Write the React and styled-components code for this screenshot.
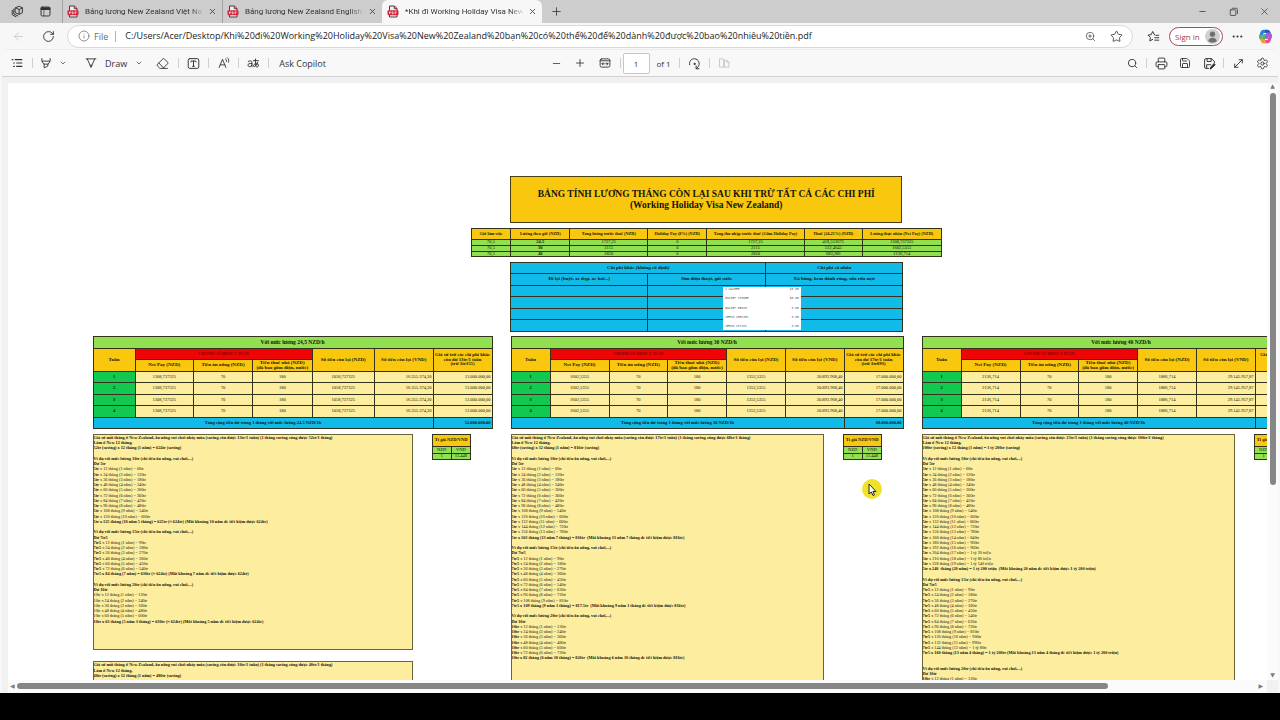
import React, { useState } from 'react'
import styled, { createGlobalStyle, css } from 'styled-components'
import { Minus, Plus, X, Search, Printer, Save, Settings, Star, ZoomIn, Info, ArrowLeft, RotateCw, ChevronDown, Eraser, MoveDiagonal, Ellipsis } from 'lucide-react'


const GlobalStyle = createGlobalStyle`
*, *::before, *::after{
  box-sizing: border-box;
}
body{
  margin: 0;
  background: #000;
  font-family: 'Open Sans', 'Noto Sans', sans-serif;
  color: #333;
}
button, input{
  font: inherit;
  color: inherit;
}
`

const MainContainer = styled.div`
display: flex;
flex-direction: column;
height: 100vh;
padding-bottom: 27px;
`

const Browser = styled.div`
display: flex;
flex-direction: column;
flex: 1;
min-height: 0;
background: #f7f7f8;
`

// ---------- tab strip ----------

const TabStrip = styled.header`
display: flex;
align-items: center;
height: 23px;
padding-left: 3px;
background: #cdcdcd;
`

const IconButton = styled.button`
display: flex;
align-items: center;
justify-content: center;
flex: none;
width: ${props => props.$w || 28}px;
height: 22px;
padding: 0;
border: none;
background: transparent;
color: ${props => props.$faded ? '#c4c4c6' : '#333'};
cursor: pointer;
`

const Tabs = styled.nav`
display: flex;
padding-left: 3px;
`

const Tab = styled.div`
display: flex;
align-items: center;
width: 160px;
height: 23px;
padding: 0 2px 0 4px;
border-left: 1px solid ${props => props.$active ? 'transparent' : '#a3a3a3'};

${props => props.$active && css`
  background: #f7f7f8;
  border-radius: 6px 6px 0 0;
`}
`

const TabTitle = styled.span`
flex: 1;
margin-left: 6px;
overflow: hidden;
white-space: nowrap;
font-family: Roboto, sans-serif;
font-size: 8px;
line-height: 12px;
mask-image: linear-gradient(to right, #000 88%, transparent);
`

const WindowControls = styled.div`
display: flex;
margin-left: auto;
`

// ---------- address row ----------

const AddressRow = styled.div`
display: flex;
align-items: center;
height: 26px;
padding: 0 1px 0 3px;
`

const AddressBar = styled.label`
display: flex;
align-items: center;
flex: 1;
height: 23px;
margin: 0 4px;
padding: 0 3px 0 10px;
border: 1px solid #d8d8da;
border-radius: 12px;
background: #fff;
font-size: 9px;
color: #6b6b6b;
`

const FileLabel = styled.span`
margin-left: 4px;
padding-right: 7px;
border-right: 1px solid #b5b5b5;
line-height: 11px;
`

const AddressInput = styled.input`
flex: 1;
min-width: 0;
padding: 0 0 0 9px;
border: none;
outline: none;
background: transparent;
color: #222;
font-size: 9px;
line-height: 14px;
`

const SignIn = styled.button`
display: flex;
align-items: center;
justify-content: space-between;
width: 54px;
height: 19px;
padding: 0 2px 0 5px;
border: 1px solid #a34c5a;
border-radius: 10px;
background: #fff;
color: #a33a4a;
font-size: 8px;
white-space: nowrap;
`

// ---------- pdf toolbar ----------

const Toolbar = styled.div`
display: grid;
grid-template-columns: 1fr auto 1fr;
align-items: center;
height: 28px;
margin: 0 2px;
padding: 0 4px;
border-top: 1px solid #ececee;
border-bottom: 1px solid #d0d0d0;
border-radius: 6px 6px 0 0;
background: #f8f8f9;
font-size: 9px;
`

const Group = styled.div`
display: flex;
align-items: center;
justify-content: ${props => props.$end ? 'flex-end' : 'flex-start'};
`

const Divider = styled.span`
width: 1px;
height: 10px;
margin: 0 ${props => props.$tight ? 2 : 4}px;
background: #cfcfcf;
`

const DrawButton = styled.button`
display: flex;
align-items: center;
gap: 8px;
margin-left: 14px;
padding: 0;
border: none;
background: transparent;
`

const CopilotButton = styled.button`
padding: 0 6px;
border: none;
background: transparent;
white-space: nowrap;
`

const PageInput = styled.input`
width: 27px;
height: 21px;
padding: 0;
border: 1px solid #c6c6c6;
border-radius: 2px;
background: #fff;
text-align: center;
font-size: 8px;
`

const PageCount = styled.span`
width: 25px;
padding-left: 7px;
white-space: nowrap;
font-size: 8px;
`

// ---------- viewer ----------

const Viewer = styled.main`
display: grid;
grid-template-columns: 1fr 11px;
grid-template-rows: 1fr 13px;
flex: 1;
min-height: 0;
margin: 0 2px;
padding: 6px 0 0 6px;
background: #f1f1f1;
`

const Viewport = styled.div`
position: relative;
overflow: hidden;
background: #fff;
`

const ScrollTrack = styled.div`
display: flex;
align-items: center;
flex-direction: ${props => props.$vertical ? 'column' : 'row'};
padding: ${props => props.$vertical ? '0 0 2px' : '0 4px 2px 2px'};
background: #fbfbfb;
color: #7c7c7c;
font-family: 'DejaVu Sans', sans-serif;
font-size: 6px;
line-height: 6px;
`

const Rail = styled.div`
flex: 1;
margin: ${props => props.$vertical ? '4px 0 2px' : '0 2px'};

&::before{
  content: '';
  display: block;
  width: ${props => props.$vertical ? '6px' : '88%'};
  height: ${props => props.$vertical ? '68%' : '6px'};
  border-radius: 3px;
  background: #868686;
}
`

const Pointer = styled.div`
position: absolute;
left: 854px;
top: 396px;
width: 20px;
height: 20px;
border-radius: 50%;
background: #efe32a;
`

// ---------- the page, set at full size and zoomed out by the viewer ----------

const Sheet = styled.article`
zoom: ${props => props.$zoom};
display: flex;
flex-direction: column;
align-items: center;
gap: 18px;
width: 5248px;
padding: 372px 0 0 338px;
font-family: 'Liberation Serif', serif;
font-size: 17px;
line-height: 21px;
color: #14140c;
`

const Banner = styled.h1`
display: flex;
align-items: center;
justify-content: center;
width: 1568px;
height: 188px;
margin: 0;
padding-top: 4px;
border: 4px solid #4a3f10;
background: #f9c80e;
text-align: center;
font-size: 38px;
line-height: 46px;
`

const Table = styled.table`
width: ${props => props.$w ? props.$w + 'px' : '100%'};
border-collapse: collapse;
table-layout: fixed;
line-height: 18px;

th, td{
  padding: 0 4px;
  border: 4px solid #33331c;
  overflow: hidden;
}

th{
  padding: 0;
}
`

const Row = styled.tr`
height: ${props => props.$h || 46}px;
`

const tones = {
  gold: '#f9c80e',
  lime: '#92e052',
  cyan: '#10bbea',
  cream: '#fcee9e',
  green: '#12c850',
  red: '#ee0505',
}

const Head = styled.th`
background: ${props => tones[props.$tone]};
color: ${props => props.$tone === 'red' ? '#8c0000' : 'inherit'};
font-size: ${props => props.$size || 20}px;
white-space: nowrap;
`

const Cell = styled.td`
background: ${props => tones[props.$tone]};
text-align: ${props => props.$right ? 'right' : 'center'};
font-weight: ${props => props.$bold ? 700 : 400};
font-size: 18px;
`

const CostsWrap = styled.div`
position: relative;
width: 1568px;
`

const Receipt = styled.div`
position: absolute;
left: 850px;
top: 100px;
display: flex;
flex-direction: column;
justify-content: space-between;
width: 314px;
height: 172px;
padding: 6px 10px;
background: #fff;
font-family: 'Liberation Mono', monospace;
font-size: 12px;
line-height: 14px;
color: #555;
`

const ReceiptLine = styled.div`
display: flex;
justify-content: space-between;
`

const Columns = styled.div`
display: flex;
align-items: flex-start;
gap: 76px;
width: 100%;
`

const Column = styled.section`
display: flex;
flex-direction: column;
gap: 18px;
width: ${props => props.$w}px;
`

const Below = styled.div`
display: flex;
align-items: flex-start;
gap: 76px;
`

const NotesStack = styled.div`
display: flex;
flex-direction: column;
gap: 46px;
width: ${props => props.$w}px;
`

const Notes = styled.div`
min-height: ${props => props.$h}px;
border: 4px solid #6b6536;
background: #fcee9e;
white-space: pre;
`

const Line = styled.p`
min-height: 21px;
margin: 0;
font-weight: ${props => props.$bold ? 700 : 400};
`


const rates = [
  ['70,5', '24,5', '1727,25', '0', '1727,25', '418,512675', '1308,737325'],
  ['70,5', '30', '2115', '0', '2115', '512,4645', '1602,5355'],
  ['70,5', '40', '2820', '0', '2820', '683,286', '2136,714'],
]

const receipt = [
  ['1 WASHER', '$3.00'],
  ['BUCKET SPONGE', '$5.00'],
  ['BUCKET BRUSH', '3.00'],
  ['SERVO SHELVES', '3.00'],
  ['SERVO series', '3.00'],
]

const columns = [
  {
    width: 1596,
    notesWidth: 1280,
    cols: [168, 234, 236, 238, 250, 234, 236],
    wage: '24,5',
    net: '1308,737325',
    left: '1058,737325',
    vnd: '16.355.374,20',
    spare: '13.000.000,00',
    total: '52.000.000,00',
    perWeek: '13tr',
    cut: '3tr355',
    notes: [
      {
        height: 864,
        intro: ['13tr', '52tr', '52tr (saving) x 12 tháng (1 năm) = 624tr (saving)'],
        plans: [
          { income: '10tr', spare: '5tr', per: 5, years: 10, end: '5tr x 125 tháng (10 năm 5 tháng) = 625tr (≈ 624tr) (Mất khoảng 10 năm để tiết kiệm được 624tr)' },
          { income: '15tr', spare: '7tr5', per: 7.5, years: 6, end: '7tr5 x 84 tháng (7 năm) = 630tr (≈ 624tr) (Mất khoảng 7 năm để tiết kiệm được 624tr)' },
          { income: '20tr', spare: '10tr', per: 10, years: 5, light: true, end: '10tr x 63 tháng (5 năm 3 tháng) = 630tr (≈ 624tr) (Mất khoảng 5 năm để tiết kiệm được 624tr)' },
        ],
      },
      {
        height: 864,
        intro: ['10tr', '40tr', '40tr (saving) x 12 tháng (1 năm) = 480tr (saving)'],
        plans: [],
      },
    ],
  },
  {
    width: 1568,
    notesWidth: 1252,
    cols: [156, 236, 234, 236, 236, 234, 236],
    wage: '30',
    net: '1602,5355',
    left: '1352,5355',
    vnd: '20.893.968,40',
    spare: '17.000.000,00',
    total: '68.000.000,00',
    perWeek: '17tr',
    cut: '3tr893',
    notes: [
      {
        height: 1100,
        intro: ['17tr', '68tr', '68tr (saving) x 12 tháng (1 năm) = 816tr (saving)'],
        plans: [
          { income: '10tr', spare: '5tr', per: 5, years: 13, end: '5tr x 163 tháng (13 năm 7 tháng) = 816tr  (Mất khoảng 13 năm 7 tháng để tiết kiệm được 816tr)' },
          { income: '15tr', spare: '7tr5', per: 7.5, years: 9, end: '7tr5 x 109 tháng (9 năm 1 tháng) = 817.5tr  (Mất khoảng 9 năm 1 tháng để tiết kiệm được 816tr)' },
          { income: '20tr', spare: '10tr', per: 10, years: 6, end: '10tr x 82 tháng (6 năm 10 tháng) = 820tr  (Mất khoảng 6 năm 10 tháng để tiết kiệm được 816tr)' },
        ],
      },
    ],
  },
  {
    width: 1592,
    notesWidth: 1252,
    cols: [156, 236, 234, 236, 236, 234, 260],
    wage: '40',
    net: '2136,714',
    left: '1886,714',
    vnd: '29.145.957,87',
    spare: '25.000.000,00',
    total: '100.000.000,00',
    perWeek: '25tr',
    cut: '4tr145',
    notes: [
      {
        height: 1100,
        intro: ['25tr', '100tr', '100tr (saving) x 12 tháng (1 năm) = 1 tỷ 200tr (saving)'],
        plans: [
          { income: '10tr', spare: '5tr', per: 5, years: 19, end: '5tr x 240  tháng (20 năm) = 1 tỷ 200 triệu  (Mất khoảng 20 năm để tiết kiệm được 1 tỷ 200 triệu)' },
          { income: '15tr', spare: '7tr5', per: 7.5, years: 12, extra: true, end: '7tr5 x 160 tháng (13 năm 4 tháng) = 1 tỷ 200tr (Mất khoảng 13 năm 4 tháng để tiết kiệm được 1 tỷ 200 triệu)' },
          { income: '20tr', spare: '10tr', per: 10, years: 1 },
        ],
      },
    ],
  },
]

const money = (value, per) => {
  if (value < 1000) return `${value}tr`
  return per === 5 ? `1 tỷ ${value - 1000} triệu` : `1 tỷ ${value - 1000}tr`
}


const PdfIcon = () => (
  <svg width="12" height="13" viewBox="0 0 12 13" fill="none">
    <path d="M2.5 6V1h5l2.5 2.5V6M2.5 10v2H10v-2" fill="#f4eded" stroke="#5d3338" />
    <path d="M7.3 1v2.7H10" stroke="#5d3338" />
    <rect x="0.5" y="5.3" width="11" height="5" rx="1" fill="#d3283c" />
    <path d="M2.5 9V6.8h1v1h-1M5.2 6.8V9c1.6 0 1.6-2.2 0-2.2M8 9V6.8h1.6M8 8h1.2" stroke="#fff" strokeWidth="0.6" />
  </svg>
)

const Glyph = ({ size = 13, children }) => (
  <svg width={size} height={size} viewBox="0 0 16 16" fill="none" stroke="currentColor" strokeWidth="1.2" strokeLinecap="round" strokeLinejoin="round">{children}</svg>
)

const CopilotLogo = () => (
  <svg width="15" height="15" viewBox="0 0 16 16" fill="none" strokeWidth="3.4" strokeLinecap="round" strokeLinejoin="round">
    <path d="M9 2.5H6.2C4.8 2.5 4.3 3.4 4 4.5L3 8" stroke="#2a7de1" />
    <path d="M3 7.5c-.6 2 0 3 1.4 3H6l1-3.5" stroke="#4cb86a" />
    <path d="M9 2.5h1.3c1 0 1.3 1.2 1.6 2.5" stroke="#2457c5" />
    <path d="M7 13.5h2.8c1.4 0 1.9-.9 2.2-2l1-3.5" stroke="#e0518f" />
    <path d="M13 8.5c.6-2 0-3-1.4-3H10l-1 3.5" stroke="#a45be0" />
    <path d="M7 13.5H5.7c-.9 0-1.2-1-1.5-2" stroke="#f39a3c" />
  </svg>
)

const BrowserTab = ({ title, active }) => (
  <Tab $active={active}>
    <PdfIcon />
    <TabTitle>{title}</TabTitle>
    <IconButton $w={16} aria-label="Close tab"><X size={9} /></IconButton>
  </Tab>
)

const Chrome = () => {
  const [url, setUrl] = useState('C:/Users/Acer/Desktop/Khi%20đi%20Working%20Holiday%20Visa%20New%20Zealand%20bạn%20có%20thể%20để%20dành%20được%20bao%20nhiêu%20tiền.pdf')

  return (
    <>
      <TabStrip>
        <IconButton aria-label="Workspaces">
          <Glyph>
            <path d="M5.5 3.5 10 1.5l4 2v6l-4 2-4.5-2zM5.5 3.5l4.5 2 4-2M10 5.5v6" />
            <path d="M3.5 5v6l5 2.5M1.5 6.5V12L6 14.5" />
          </Glyph>
        </IconButton>
        <IconButton aria-label="Tab actions">
          <Glyph>
            <rect x="2.5" y="2.5" width="11" height="11" rx="1.5" />
            <path d="M3 4h10M3 5h10" strokeWidth="2.2" />
            <path d="M6 5v8" strokeWidth="0.8" />
          </Glyph>
        </IconButton>
        <Tabs>
          <BrowserTab title="Bảng lương New Zealand Việt Na" />
          <BrowserTab title="Bảng lương New Zealand English." />
          <BrowserTab title="*Khi đi Working Holiday Visa New" active />
        </Tabs>
        <IconButton aria-label="New tab"><Plus size={13} strokeWidth={1.5} /></IconButton>
        <WindowControls>
          <IconButton $w={31} aria-label="Minimize"><Minus size={9} /></IconButton>
          <IconButton $w={31} aria-label="Restore">
            <Glyph size={10}><rect x="2" y="4.5" width="9" height="9" rx="1" /><path d="M5 2h6.5a2 2 0 0 1 2 2v6.5" /></Glyph>
          </IconButton>
          <IconButton $w={31} aria-label="Close"><X size={11} strokeWidth={1.5} /></IconButton>
        </WindowControls>
      </TabStrip>

      <AddressRow>
        <IconButton $w={30} $faded aria-label="Back"><ArrowLeft size={13} strokeWidth={1.5} /></IconButton>
        <IconButton $w={30} aria-label="Refresh"><RotateCw size={13} strokeWidth={1.7} /></IconButton>
        <AddressBar>
          <Info size={12} strokeWidth={1.5} />
          <FileLabel>File</FileLabel>
          <AddressInput aria-label="Address" value={url} onChange={e => setUrl(e.target.value)} />
          <IconButton $w={26} aria-label="Zoom"><ZoomIn size={11} strokeWidth={1.5} /></IconButton>
          <IconButton $w={26} aria-label="Add to favorites"><Star size={13} strokeWidth={1.5} /></IconButton>
        </AddressBar>
        <IconButton $w={32} aria-label="Favorites">
          <Glyph>
            <path d="M9.5 6.3 7 1.8 5.2 5.7l-4 .6 3 3-.7 4.2L7 11.5M11 6.5h3.5M9.5 9.5h5M9.5 12.5h5" />
          </Glyph>
        </IconButton>
        <SignIn>
          Sign in
          <svg width="15" height="15" viewBox="0 0 16 16">
            <circle cx="8" cy="8" r="8" fill="#cfcfcf" />
            <circle cx="8" cy="5.5" r="2.8" fill="#6f6f6f" />
            <path d="M3.5 13c0-5 9-5 9 0-2.5 2-6.5 2-9 0z" fill="#6f6f6f" />
          </svg>
        </SignIn>
        <IconButton aria-label="Settings and more"><Ellipsis size={13} /></IconButton>
        <IconButton aria-label="Copilot"><CopilotLogo /></IconButton>
      </AddressRow>
    </>
  )
}

const PdfToolbar = () => {
  const [page, setPage] = useState('1')

  return (
    <Toolbar>
      <Group>
        <IconButton $w={22} aria-label="Contents">
          <Glyph size={12}><path d="M5.5 3.5h9M7.5 8h7M7.5 12.5h7M1.5 3.5h1M3.5 8h1M3.5 12.5h1" strokeWidth="1.4" /></Glyph>
        </IconButton>
        <Divider />
        <IconButton $w={18} aria-label="Highlight">
          <Glyph size={12}><path d="M2.5 2v3.5L5 9.5h6L13.5 5.5V2M3 5.5h10M5.5 9.5v5l5-2.5V9.5" /></Glyph>
        </IconButton>
        <IconButton $w={16} aria-label="Highlight colors"><ChevronDown size={8} /></IconButton>
        <DrawButton>
          <Glyph size={12}><path d="M1.5 2.5h13M3 2.5l4 9 1 2.5 1-2.5 4-9M6.8 11h2.4" /></Glyph>
          Draw
        </DrawButton>
        <IconButton $w={24} aria-label="Draw options"><ChevronDown size={8} /></IconButton>
        <IconButton $w={23} aria-label="Erase"><Eraser size={13} strokeWidth={1.7} /></IconButton>
        <Divider />
        <IconButton $w={21} aria-label="Add text">
          <Glyph><rect x="1.5" y="2" width="13" height="12" rx="2" /><path d="M5 6V5h6v1M8 5v6.5M7 11.5h2" /></Glyph>
        </IconButton>
        <Divider />
        <IconButton $w={21} aria-label="Read aloud">
          <Glyph size={12}><path d="M1.5 14 6 3l4.5 11M3 10.5h6M10 2.5c1.2.8 1.5 2 1.2 3.5M12.5 1c2 1.5 2.3 4 1.5 6" /></Glyph>
        </IconButton>
        <Divider />
        <IconButton $w={21} aria-label="Translate">
          <Glyph><path d="M1.5 5.5c2-1.5 4.5-.8 4.5 1V12M6 8C3 7.5 1 8.5 1.2 10.2 1.5 12.5 5 12.5 6 10M8 4.5h6M10.5 2.5c-.3 4 0 7 .8 9.5M13 6.5c-1 4-4 6-5 4.8-1.3-2 3.5-4 5.5-2.5 1.5 1.2.8 3-1 3.6" /></Glyph>
        </IconButton>
        <Divider />
        <CopilotButton>Ask Copilot</CopilotButton>
      </Group>

      <Group>
        <IconButton $w={22} aria-label="Zoom out"><Minus size={11} strokeWidth={1.7} /></IconButton>
        <IconButton $w={24} aria-label="Zoom in"><Plus size={12} strokeWidth={1.7} /></IconButton>
        <IconButton $w={26} aria-label="Fit to width">
          <Glyph size={12}><rect x="1.5" y="2.5" width="13" height="11" rx="2" /><path d="M1.5 5h13M4 9h3M5.5 7.5 4 9l1.5 1.5M12 9H9M10.5 7.5 12 9l-1.5 1.5" /></Glyph>
        </IconButton>
        <Divider $tight />
        <PageInput aria-label="Page" value={page} onChange={e => setPage(e.target.value)} />
        <PageCount>of 1</PageCount>
        <Divider />
        <IconButton $w={21} aria-label="Rotate">
          <Glyph><path d="M2 9.5C1 5 4.5 2 8 2.2c5 .3 7.5 6 4.3 10L10 14.5M10 11v3.5h3.5" /><circle cx="8" cy="8.5" r="0.8" fill="currentColor" /></Glyph>
        </IconButton>
        <Divider />
        <IconButton $w={21} $faded aria-label="Page view">
          <Glyph size={12}><path d="M7 13.5H2v-11h5zM9 4.5h3l2.5 2.5v6.5H9zM12 4.5V7h2.5" /></Glyph>
        </IconButton>
      </Group>

      <Group $end>
        <IconButton $w={24} aria-label="Find"><Search size={11} /></IconButton>
        <Divider $tight />
        <IconButton $w={24} aria-label="Print"><Printer size={13} strokeWidth={1.7} /></IconButton>
        <IconButton $w={24} aria-label="Save"><Save size={12} strokeWidth={1.8} /></IconButton>
        <IconButton $w={24} aria-label="Save as">
          <Glyph>
            <path d="M7 14H3.5A1.5 1.5 0 0 1 2 12.5v-9A1.5 1.5 0 0 1 3.5 2h7L14 5.5V7M5 2v3.5h5V2M4.5 14V9.5h5" />
            <path d="M9 14.5l.5-2L13.5 8l1.5 1.5-4.5 4.5z" fill="currentColor" />
          </Glyph>
        </IconButton>
        <Divider $tight />
        <IconButton $w={24} aria-label="Full screen"><MoveDiagonal size={13} strokeWidth={1.7} /></IconButton>
        <IconButton $w={24} aria-label="Settings"><Settings size={13} strokeWidth={1.7} /></IconButton>
      </Group>
    </Toolbar>
  )
}

const Cols = ({ widths }) => (
  <colgroup>{widths.map((w, i) => <col key={i} width={w} />)}</colgroup>
)

const RatesTable = () => (
  <Table $w={1880}>
    <Cols widths={[158, 236, 312, 236, 390, 232, 316]} />
    <thead>
      <Row>
        <Head $tone="gold" $size={17}>Giờ làm việc</Head>
        <Head $tone="gold" $size={17}>Lương theo giờ (NZD)</Head>
        <Head $tone="gold" $size={17}>Tổng lương trước thuế (NZD)</Head>
        <Head $tone="gold" $size={17}>Holiday Pay (8%) (NZD)</Head>
        <Head $tone="gold" $size={17}>Tổng thu nhập trước thuế (Gồm Holiday Pay)</Head>
        <Head $tone="gold" $size={17}>Thuế (24,25%) (NZD)</Head>
        <Head $tone="gold" $size={17}>Lương thực nhận (Net Pay) (NZD)</Head>
      </Row>
    </thead>
    <tbody>
      {rates.map(rate => (
        <Row key={rate[1]} $h={23}>
          {rate.map((value, i) => <Cell key={i} $tone="lime" $bold={i === 1}>{value}</Cell>)}
        </Row>
      ))}
    </tbody>
  </Table>
)

const CostsTable = () => (
  <CostsWrap>
    <Table>
      <Cols widths={[548, 472, 548]} />
      <thead>
        <Row>
          <Head $tone="cyan" colSpan={2}>Chi phí khác (không cố định)</Head>
          <Head $tone="cyan">Chi phí cá nhân</Head>
        </Row>
        <Row>
          <Head $tone="cyan">Đi lại (buýt, xe đạp, xe hơi...)</Head>
          <Head $tone="cyan">Sim điện thoại, gói cước</Head>
          <Head $tone="cyan">Xà bông, kem đánh răng, sữa rửa mặt</Head>
        </Row>
      </thead>
      <tbody>
        {[1, 2, 3, 4].map(n => (
          <Row key={n}>
            <Cell $tone="cyan" />
            <Cell $tone="cyan" />
            <Cell $tone="cyan" />
          </Row>
        ))}
      </tbody>
    </Table>
    <Receipt>
      {receipt.map(([item, price]) => (
        <ReceiptLine key={item}><span>{item}</span><span>{price}</span></ReceiptLine>
      ))}
    </Receipt>
  </CostsWrap>
)

const WageTable = ({ data }) => (
  <Table>
    <Cols widths={data.cols} />
    <thead>
      <Row><Head $tone="lime" $size={22} colSpan={7}>Với mức lương {data.wage} NZD/h</Head></Row>
      <Row>
        <Head $tone="gold" rowSpan={2}>Tuần</Head>
        <Head $tone="red" $size={16} colSpan={3}>CHI PHÍ CỐ ĐỊNH /1 TUẦN</Head>
        <Head $tone="gold" rowSpan={2}>Số tiền còn lại (NZD)</Head>
        <Head $tone="gold" rowSpan={2}>Số tiền còn lại (VND)</Head>
        <Head $tone="gold" $size={19} rowSpan={2}>Giả sử trừ các chi phí khác<br />còn dư {data.perWeek}/1 tuần<br />(trừ {data.cut})</Head>
      </Row>
      <Row>
        <Head $tone="gold">Net Pay (NZD)</Head>
        <Head $tone="gold">Tiền ăn uống (NZD)</Head>
        <Head $tone="gold">Tiền thuê nhà (NZD)<br />(đã bao gồm điện, nước)</Head>
      </Row>
    </thead>
    <tbody>
      {[1, 2, 3, 4].map(week => (
        <Row key={week}>
          <Cell $tone="green" $bold>{week}</Cell>
          <Cell $tone="cream">{data.net}</Cell>
          <Cell $tone="cream">70</Cell>
          <Cell $tone="cream">180</Cell>
          <Cell $tone="cream">{data.left}</Cell>
          <Cell $tone="cream" $right>{data.vnd}</Cell>
          <Cell $tone="cream" $right>{data.spare}</Cell>
        </Row>
      ))}
      <Row>
        <Cell $tone="cyan" $bold colSpan={6}>Tổng cộng tiền dư trong 1 tháng với mức lương {data.wage} NZD/1h</Cell>
        <Cell $tone="cyan" $bold $right>{data.total}</Cell>
      </Row>
    </tbody>
  </Table>
)

const Plan = ({ plan }) => (
  <>
    <Line />
    <Line $bold>Ví dụ với mức lương {plan.income} (chi tiêu ăn uống, vui chơi,...)</Line>
    <Line $bold>Dư {plan.spare}</Line>
    {Array.from({ length: plan.years }, (_, i) => i + 1).map(year => (
      <Line key={year}>
        {plan.light ? plan.spare : <b>{plan.spare}</b>} x {year * 12} tháng ({year} năm) = {money(year * 12 * plan.per, plan.per)}
      </Line>
    ))}
    {plan.end && <Line $bold>{plan.end}</Line>}
    {plan.extra && <Line />}
  </>
)

const NotesBox = ({ data }) => (
  <Notes $h={data.height}>
    <Line $bold>Giả sử mỗi tháng ở New Zealand, ăn uống vui chơi nhảy múa (saving còn được {data.intro[0]}/1 tuần) (1 tháng saving cũng được {data.intro[1]}/1 tháng)</Line>
    <Line $bold>Làm ở New 12 tháng,</Line>
    <Line $bold>{data.intro[2]}</Line>
    {data.plans.map(plan => <Plan key={plan.income} plan={plan} />)}
  </Notes>
)

const ExchangeTable = () => (
  <Table $w={158}>
    <thead>
      <Row $h={50}><Head $tone="gold" $size={18} colSpan={2}>Tỉ giá NZD/VND</Head></Row>
    </thead>
    <tbody>
      <Row $h={25}><Cell $tone="lime">NZD</Cell><Cell $tone="lime">VND</Cell></Row>
      <Row $h={25}><Cell $tone="lime">1</Cell><Cell $tone="lime">15.448</Cell></Row>
    </tbody>
  </Table>
)

const App = () => {
  return (
    <MainContainer>
      <GlobalStyle />
      <Browser>
        <Chrome />
        <PdfToolbar />
        <Viewer>
          <Viewport>
            <Sheet $zoom={0.25}>
              <Banner>BẢNG TÍNH LƯƠNG THÁNG CÒN LẠI SAU KHI TRỪ TẤT CẢ CÁC CHI PHÍ<br />(Working Holiday Visa New Zealand)</Banner>
              <RatesTable />
              <CostsTable />
              <Columns>
                {columns.map(data => (
                  <Column key={data.wage} $w={data.width}>
                    <WageTable data={data} />
                    <Below>
                      <NotesStack $w={data.notesWidth}>
                        {data.notes.map(notes => <NotesBox key={notes.intro[0]} data={notes} />)}
                      </NotesStack>
                      <ExchangeTable />
                    </Below>
                  </Column>
                ))}
              </Columns>
            </Sheet>
            <Pointer>
              <svg width="20" height="20" viewBox="0 0 20 20">
                <path d="M7 5v10l2.3-2 1.7 3.5 1.5-.7-1.6-3.3H14z" fill="#fff" stroke="#222" />
              </svg>
            </Pointer>
          </Viewport>
          <ScrollTrack $vertical>
            ▲
            <Rail $vertical />
            ▼
          </ScrollTrack>
          <ScrollTrack>
            ◀
            <Rail />
            ▶
          </ScrollTrack>
        </Viewer>
      </Browser>
    </MainContainer>
  )
}

export default App
